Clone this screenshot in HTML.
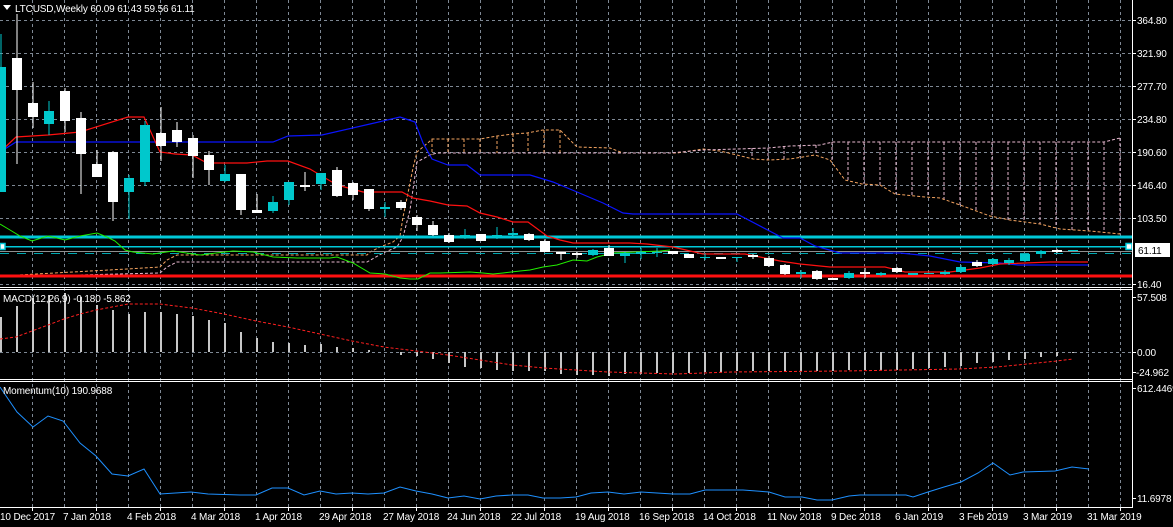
<!DOCTYPE html>
<html><head><meta charset="utf-8"><style>
html,body{margin:0;padding:0;background:#000;width:1173px;height:527px;overflow:hidden}
svg{display:block}
text{font-family:"Liberation Sans",sans-serif;font-size:10px;letter-spacing:-0.15px;fill:#fff}
.g{stroke:#7e8894;stroke-width:1;stroke-dasharray:3 3;fill:none}
.w{fill:#fff}.c{fill:#00c8cc}
</style></head><body>
<svg width="1173" height="527" viewBox="0 0 1173 527" xmlns="http://www.w3.org/2000/svg">
<rect width="1173" height="527" fill="#000"/>
<path class="g" d="M0 20.5H1132M0 53.5H1132M0 86.5H1132M0 119.5H1132M0 152.5H1132M0 185.5H1132M0 218.5H1132M0 284.5H1132M0 352.5H1132"/>
<path class="g" d="M32.5 0V507M64.5 0V507M96.5 0V507M128.5 0V507M160.5 0V507M192.5 0V507M224.5 0V507M256.5 0V507M288.5 0V507M320.5 0V507M352.5 0V507M384.5 0V507M416.5 0V507M448.5 0V507M480.5 0V507M512.5 0V507M544.5 0V507M576.5 0V507M608.5 0V507M640.5 0V507M672.5 0V507M704.5 0V507M736.5 0V507M768.5 0V507M800.5 0V507M832.5 0V507M864.5 0V507M896.5 0V507M928.5 0V507M960.5 0V507M992.5 0V507M1024.5 0V507M1056.5 0V507M1088.5 0V507M1120.5 0V507"/>

<g fill="none" stroke-width="1" stroke-dasharray="3 2">
<path stroke="#f4a460" d="M432 139V155M448 139V153M464 139V153M480 139V153M497 136V153M513 134V153M528 133V153M544 130V153M560 130V153"/>
<path stroke="#e8b8d0" d="M752 148V159M768 148V160M784 146V159M800 146V157M816 145V155M832 142V160M848 142V181M864 142V184M880 142V185M896 142V194M912 142V196M928 142V197M944 142V200M960 142V205M976 142V211M992 142V216M1008 142V220M1024 142V222M1040 142V224M1056 142V228M1072 142V230M1088 142V231M1104 142V233M1120 138V234"/>
<polyline stroke="#f4a460" points="0,276 127,269 160,267 167,260 177,255 367,255 370,252 380,247 393,242 400,236 403,217 408,193 413,168 417,152 423,147 430,141 432,139 480,139 497,136 513,134 527,133 543,130 560,130 567,137 577,147 610,148 623,153 677,153 703,149 720,151 737,155 753,159 768,160 790,159 815,155 830,160 845,180 862,184 880,185 895,194 925,197 940,198 960,205 990,216 1010,220 1040,224 1060,229 1090,231 1120,234"/>
<polyline stroke="#e8b8d0" points="0,277 160,273 167,267 177,262 367,262 383,253 397,247 403,237 410,210 417,162 430,155 437,153 670,153 703,150 737,149 768,148 790,146 820,145 833,142 1104,142 1120,138"/>
</g>

<rect x="0" y="235.5" width="1132" height="3" fill="#00c8d8"/>
<rect x="0" y="246" width="1132" height="1.5" fill="#00c8d8"/>
<path d="M0 251.5H1132" stroke="#909090" stroke-width="1"/>
<path d="M0 253.5H1132" stroke="#00a8b0" stroke-width="1" stroke-dasharray="9 8"/>
<rect x="0" y="274.5" width="1132" height="3" fill="#ff1010"/>
<rect x="1126" y="243.5" width="6" height="6" fill="#fff" stroke="#00c8d8" stroke-width="1.5"/>
<rect x="0" y="243.5" width="5" height="6" fill="#fff" stroke="#00c8d8" stroke-width="1.5"/>

<polyline fill="none" stroke="#22ee00" stroke-width="1" points="0,224 10,230 20,236 32,241 48,236 65,240 80,236 97,233 107,237 115,241 125,250 133,252 153,254 173,251 200,255 233,251 253,252 273,257 297,258 330,258 337,257 353,263 370,273 385,274 400,278 410,279 418,279 430,273 440,273 470,272 483,273 493,274 503,273 520,271 530,270 543,267 557,265 573,260 587,261 597,257 613,253 637,252 660,251 670,250"/>
<polyline fill="none" stroke="#0a14ff" stroke-width="1.2" points="0,152 16,142 273,142 288,136 322,135 370,124 400,117 415,122 423,143 432,159 448,165 467,165 480,175 530,175 553,182 577,192 603,203 623,213 633,214 737,214 783,238 800,238 815,246 840,253 900,253 930,256 960,262 1000,263 1018,265 1088,265"/>
<polyline fill="none" stroke="#ff1010" stroke-width="1.2" points="0,152 16,137 48,135 80,132 128,117 144,117 160,152 175,154 192,155 207,163 247,163 267,161 288,161 310,169 337,185 363,192 402,192 413,198 430,201 448,205 467,206 480,213 497,217 513,222 528,222 547,236 560,240 573,243 630,243 647,244 673,247 703,254 745,254 760,257 780,261 800,264 830,267 885,267 905,272 950,272 980,268 1000,264 1050,262 1088,262"/>

<g fill="#fff">
<rect x="16.5" y="14" width="1" height="150"/><rect x="32.5" y="82" width="1" height="46"/><rect x="64.5" y="88" width="1" height="44"/><rect x="80.5" y="112" width="1" height="82"/><rect x="96.5" y="150" width="1" height="26"/><rect x="112.5" y="151" width="1" height="70"/><rect x="160.5" y="107" width="1" height="54"/><rect x="176.5" y="122" width="1" height="25"/><rect x="192.5" y="135" width="1" height="43"/><rect x="208.5" y="151" width="1" height="34"/><rect x="240.5" y="174" width="1" height="41"/><rect x="256.5" y="194" width="1" height="19"/><rect x="304.5" y="172" width="1" height="19"/><rect x="336.5" y="167" width="1" height="30"/><rect x="352.5" y="182" width="1" height="18"/><rect x="368.5" y="189" width="1" height="22"/><rect x="400.5" y="200" width="1" height="10"/><rect x="416.5" y="215" width="1" height="16"/><rect x="432.5" y="221" width="1" height="15"/><rect x="448.5" y="233" width="1" height="10"/><rect x="528.5" y="233" width="1" height="8"/><rect x="544.5" y="239" width="1" height="13"/><rect x="560.5" y="252" width="1" height="8"/><rect x="576.5" y="252" width="1" height="6"/><rect x="608.5" y="245" width="1" height="11"/><rect x="768.5" y="256" width="1" height="11"/><rect x="784.5" y="264" width="1" height="11"/><rect x="816.5" y="270" width="1" height="10"/><rect x="864.5" y="268" width="1" height="10"/><rect x="896.5" y="267" width="1" height="6"/><rect x="976.5" y="260" width="1" height="7"/><rect x="752.5" y="254" width="1" height="5"/><rect x="1056.5" y="249" width="1" height="4"/>
</g>
<g fill="#00c8cc">
<rect x="0.5" y="34" width="1" height="158"/><rect x="48.5" y="101" width="1" height="34"/><rect x="128.5" y="175" width="1" height="44"/><rect x="144.5" y="121" width="1" height="65"/><rect x="224.5" y="165" width="1" height="17"/><rect x="272.5" y="196" width="1" height="17"/><rect x="288.5" y="182" width="1" height="23"/><rect x="320.5" y="173" width="1" height="17"/><rect x="384.5" y="202" width="1" height="15"/><rect x="464.5" y="229" width="1" height="10"/><rect x="496.5" y="227" width="1" height="12"/><rect x="512.5" y="228" width="1" height="9"/><rect x="592.5" y="249" width="1" height="7"/><rect x="624.5" y="252" width="1" height="11"/><rect x="640.5" y="248" width="1" height="11"/><rect x="656.5" y="248" width="1" height="9"/><rect x="704.5" y="254" width="1" height="6"/><rect x="736.5" y="257" width="1" height="5"/><rect x="800.5" y="270" width="1" height="8"/><rect x="848.5" y="271" width="1" height="8"/><rect x="880.5" y="272" width="1" height="4"/><rect x="944.5" y="270" width="1" height="5"/><rect x="960.5" y="265" width="1" height="8"/><rect x="992.5" y="258" width="1" height="7"/><rect x="1008.5" y="258" width="1" height="7"/><rect x="1024.5" y="254" width="1" height="8"/><rect x="1040.5" y="250" width="1" height="8"/>
</g>
<g class="w">
<rect x="12" y="58" width="10" height="32"/><rect x="28" y="103" width="10" height="14"/><rect x="60" y="91" width="10" height="30"/><rect x="76" y="118" width="10" height="36"/><rect x="92" y="164" width="10" height="13"/><rect x="108" y="152" width="10" height="50"/><rect x="156" y="133" width="10" height="13"/><rect x="172" y="130" width="10" height="12"/><rect x="188" y="138" width="10" height="18"/><rect x="204" y="155" width="10" height="15"/><rect x="236" y="174" width="10" height="36"/><rect x="252" y="210" width="10" height="3"/><rect x="300" y="185" width="10" height="2"/><rect x="332" y="170" width="10" height="26"/><rect x="348" y="183" width="10" height="12"/><rect x="364" y="189" width="10" height="20"/><rect x="396" y="202" width="10" height="6"/><rect x="412" y="217" width="10" height="8"/><rect x="428" y="225" width="10" height="10"/><rect x="444" y="235" width="10" height="7"/><rect x="476" y="234" width="10" height="7"/><rect x="524" y="234" width="10" height="6"/><rect x="540" y="241" width="10" height="11"/><rect x="556" y="252" width="10" height="2"/><rect x="572" y="253" width="10" height="2"/><rect x="604" y="248" width="10" height="8"/><rect x="668" y="251" width="10" height="3"/><rect x="684" y="254" width="10" height="4"/><rect x="716" y="257" width="10" height="2"/><rect x="748" y="255" width="10" height="2"/><rect x="764" y="258" width="10" height="8"/><rect x="780" y="265" width="10" height="9"/><rect x="812" y="271" width="10" height="8"/><rect x="828" y="278" width="10" height="2"/><rect x="860" y="272" width="10" height="2"/><rect x="892" y="268" width="10" height="4"/><rect x="972" y="262" width="10" height="4"/><rect x="1052" y="250" width="10" height="2"/>
</g>
<g class="c">
<rect x="-4" y="67" width="10" height="125"/><rect x="44" y="111" width="10" height="13"/><rect x="124" y="178" width="10" height="14"/><rect x="140" y="125" width="10" height="57"/><rect x="220" y="174" width="10" height="7"/><rect x="268" y="202" width="10" height="9"/><rect x="284" y="182" width="10" height="18"/><rect x="316" y="173" width="10" height="11"/><rect x="380" y="207" width="10" height="2"/><rect x="460" y="235" width="10" height="3"/><rect x="492" y="235" width="10" height="2"/><rect x="508" y="233" width="10" height="2"/><rect x="588" y="250" width="10" height="5"/><rect x="620" y="253" width="10" height="3"/><rect x="636" y="252" width="10" height="2"/><rect x="652" y="252" width="10" height="1"/><rect x="700" y="257" width="10" height="1"/><rect x="732" y="257" width="10" height="1"/><rect x="796" y="272" width="10" height="2"/><rect x="844" y="273" width="10" height="5"/><rect x="876" y="273" width="10" height="2"/><rect x="908" y="273" width="10" height="2"/><rect x="924" y="273" width="10" height="1"/><rect x="940" y="272" width="10" height="2"/><rect x="956" y="267" width="10" height="5"/><rect x="988" y="259" width="10" height="5"/><rect x="1004" y="260" width="10" height="3"/><rect x="1020" y="254" width="10" height="7"/><rect x="1036" y="251" width="10" height="3"/><rect x="1068" y="250" width="10" height="1"/>
</g>

<g fill="#c8c8c8">
<rect x="0" y="317" width="2" height="35"/><rect x="16" y="306" width="2" height="46"/><rect x="32" y="298" width="2" height="54"/><rect x="48" y="295" width="2" height="57"/><rect x="64" y="293" width="2" height="59"/><rect x="80" y="297" width="2" height="55"/><rect x="96" y="305" width="2" height="47"/><rect x="112" y="310" width="2" height="42"/><rect x="128" y="314" width="2" height="38"/><rect x="144" y="312" width="2" height="40"/><rect x="160" y="312" width="2" height="40"/><rect x="176" y="314" width="2" height="38"/><rect x="192" y="316" width="2" height="36"/><rect x="208" y="320" width="2" height="32"/><rect x="224" y="323" width="2" height="29"/><rect x="240" y="332" width="2" height="20"/><rect x="256" y="338" width="2" height="14"/><rect x="272" y="342" width="2" height="10"/><rect x="288" y="343" width="2" height="9"/><rect x="304" y="345" width="2" height="7"/><rect x="320" y="344" width="2" height="8"/><rect x="336" y="347" width="2" height="5"/><rect x="352" y="348" width="2" height="4"/><rect x="368" y="350" width="2" height="2"/>
<rect x="400" y="352" width="2" height="3"/><rect x="416" y="352" width="2" height="4"/><rect x="432" y="352" width="2" height="7"/><rect x="448" y="352" width="2" height="11"/><rect x="464" y="352" width="2" height="15"/><rect x="480" y="352" width="2" height="16"/><rect x="496" y="352" width="2" height="18"/><rect x="512" y="352" width="2" height="19"/><rect x="528" y="352" width="2" height="19"/><rect x="544" y="352" width="2" height="19"/><rect x="560" y="352" width="2" height="22"/><rect x="576" y="352" width="2" height="23"/><rect x="592" y="352" width="2" height="23"/><rect x="608" y="352" width="2" height="24"/><rect x="624" y="352" width="2" height="22"/><rect x="640" y="352" width="2" height="22"/><rect x="656" y="352" width="2" height="21"/><rect x="672" y="352" width="2" height="21"/><rect x="688" y="352" width="2" height="21"/><rect x="704" y="352" width="2" height="20"/><rect x="720" y="352" width="2" height="20"/><rect x="736" y="352" width="2" height="19"/><rect x="752" y="352" width="2" height="19"/><rect x="768" y="352" width="2" height="19"/><rect x="784" y="352" width="2" height="19"/><rect x="800" y="352" width="2" height="19"/><rect x="816" y="352" width="2" height="19"/><rect x="832" y="352" width="2" height="19"/><rect x="848" y="352" width="2" height="18"/><rect x="864" y="352" width="2" height="18"/><rect x="880" y="352" width="2" height="18"/><rect x="896" y="352" width="2" height="18"/><rect x="912" y="352" width="2" height="17"/><rect x="928" y="352" width="2" height="16"/><rect x="944" y="352" width="2" height="15"/><rect x="960" y="352" width="2" height="14"/><rect x="976" y="352" width="2" height="11"/><rect x="992" y="352" width="2" height="10"/><rect x="1008" y="352" width="2" height="8"/><rect x="1024" y="352" width="2" height="7"/><rect x="1040" y="352" width="2" height="5"/><rect x="1056" y="352" width="2" height="4"/><rect x="1072" y="352" width="2" height="1"/>
</g>
<polyline fill="none" stroke="#ff2020" stroke-width="1" stroke-dasharray="3 2" points="0,339 16,337 32,331 48,325 64,319 80,314 96,310 112,307 128,304 160,304 192,308 224,314 256,321 288,327 320,334 352,341 384,347 416,351 448,355 480,360 512,365 544,368 576,370 608,372 675,374 731,372 845,371 959,369 997,367 1057,361 1073,359"/>

<polyline fill="none" stroke="#1e90ff" stroke-width="1" points="0,387 17,412 33,427 48,416 63,421 80,443 96,456 112,474 128,476 144,469 160,494 191,492 208,494 240,495 256,495 272,488 288,488 304,495 320,491 336,494 352,493 368,494 384,493 400,487 416,491 432,494 448,498 464,496 480,499 496,496 512,495 528,495 543,498 560,498 576,497 591,493 608,492 624,494 641,492 673,494 690,494 705,490 743,490 769,492 785,497 802,497 817,500 832,500 849,496 860,495 906,495 913,497 928,492 944,487 961,482 978,473 993,463 1010,475 1023,472 1055,471 1072,467 1089,469"/>

<g fill="#fff">
<rect x="0" y="287" width="1133" height="1"/><rect x="0" y="289" width="1133" height="1"/>
<rect x="0" y="379" width="1133" height="1"/><rect x="0" y="381" width="1133" height="1"/>
<rect x="0" y="507" width="1133" height="1"/>
<rect x="1132" y="0" width="1" height="508"/>
</g>
<g stroke="#fff" stroke-width="1">
<path d="M1133 20.5h3M1133 53.5h3M1133 86.5h3M1133 119.5h3M1133 152.5h3M1133 185.5h3M1133 218.5h3M1133 284.5h3M1133 297.5h3M1133 352.5h3M1133 372.5h3M1133 388.5h3M1133 498.5h3"/>
<path d="M32.5 508v3M96.5 508v3M160.5 508v3M224.5 508v3M288.5 508v3M352.5 508v3M416.5 508v3M480.5 508v3M544.5 508v3M608.5 508v3M672.5 508v3M736.5 508v3M800.5 508v3M864.5 508v3M928.5 508v3M992.5 508v3M1056.5 508v3M1120.5 508v3"/>
</g>

<path d="M3 5h8l-4 5z" fill="#fff"/>
<text x="15" y="12">LTCUSD,Weekly  60.09 61.43 59.56 61.11</text>
<text x="3" y="302">MACD(12,26,9) -0.180 -5.862</text>
<text x="3" y="394">Momentum(10) 190.9688</text>
<g>
<text x="1137" y="24">364.80</text>
<text x="1137" y="57">321.90</text>
<text x="1137" y="90">277.70</text>
<text x="1137" y="123">234.80</text>
<text x="1137" y="156">190.60</text>
<text x="1137" y="189">146.40</text>
<text x="1137" y="222">103.50</text>
<rect x="1135" y="243" width="35" height="14" fill="#fff"/>
<text x="1138" y="254" style="fill:#000">61.11</text>
<text x="1137" y="288">16.40</text>
<text x="1137" y="301">57.508</text>
<text x="1137" y="356">0.00</text>
<text x="1136" y="376">-24.962</text>
<text x="1137" y="392">612.4469</text>
<text x="1137" y="502">11.6978</text>
</g>
<g>
<text x="0" y="520">10 Dec 2017</text>
<text x="63" y="520">7 Jan 2018</text>
<text x="127" y="520">4 Feb 2018</text>
<text x="191" y="520">4 Mar 2018</text>
<text x="255" y="520">1 Apr 2018</text>
<text x="319" y="520">29 Apr 2018</text>
<text x="383" y="520">27 May 2018</text>
<text x="447" y="520">24 Jun 2018</text>
<text x="511" y="520">22 Jul 2018</text>
<text x="575" y="520">19 Aug 2018</text>
<text x="639" y="520">16 Sep 2018</text>
<text x="703" y="520">14 Oct 2018</text>
<text x="767" y="520">11 Nov 2018</text>
<text x="831" y="520">9 Dec 2018</text>
<text x="895" y="520">6 Jan 2019</text>
<text x="959" y="520">3 Feb 2019</text>
<text x="1023" y="520">3 Mar 2019</text>
<text x="1087" y="520">31 Mar 2019</text>
</g>
</svg>
</body></html>
